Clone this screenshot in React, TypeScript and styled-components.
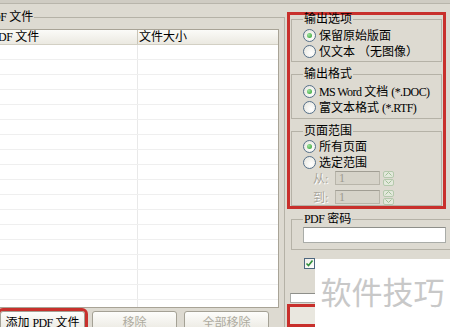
import React from 'react';
import styled, { createGlobalStyle } from 'styled-components';

const FONT = `"Liberation Serif", "Noto Sans CJK SC", serif`;

const GlobalStyle = createGlobalStyle`
  html, body { margin: 0; padding: 0; }
  body { width: 450px; height: 327px; overflow: hidden; background: #dddad1; }
  #root { width: 450px; height: 327px; }
`;

const Screen = styled.div`
  position: relative;
  width: 450px;
  height: 327px;
  overflow: hidden;
  background: #dddad1;
  display: flex;
  flex-direction: column;
  font-family: ${FONT};
  font-size: 12px;
  color: #000;
`;

const TopStrip = styled.div`
  flex: none;
  height: 3px;
  background: #cfccc3;
  border-bottom: 1px solid #b8b5ab;
`;

const Main = styled.div`
  flex: 1;
  min-height: 0;
  display: flex;
`;

/* Latin runs are drawn narrower, like the bitmap font of the original */
const Latin = styled.span`
  font-size: 12px;
  letter-spacing: -0.6px;
`;

/* ---------- group boxes ---------- */

const FileGroup = styled.fieldset`
  flex: none;
  box-sizing: border-box;
  width: 305px;
  height: 340px;
  margin: 7px 0 0 -20px;
  padding: 0;
  min-width: 0;
  border: 1px solid #b5b2a7;
`;

const Legend = styled.legend<{ $lh?: number; $indent?: number }>`
  padding: 0 1px;
  margin-left: ${p => p.$indent ?? 0}px;
  line-height: ${p => p.$lh ?? 12}px;
  font-size: 12px;
  white-space: nowrap;
`;

const OptionGroup = styled.fieldset<{ $top: number; $bottom: number; $width?: number; $left?: number }>`
  box-sizing: border-box;
  ${p => (p.$width ? `width: ${p.$width}px;` : '')}
  margin: ${p => p.$top}px 0 0 ${p => p.$left ?? 0}px;
  padding: 0 0 ${p => p.$bottom}px 11px;
  min-width: 0;
  border: 1px solid #b5b2a7;
  display: flex;
  flex-direction: column;
`;

/* ---------- file list ---------- */

const FileList = styled.div`
  box-sizing: border-box;
  width: 289px;
  height: 279px;
  margin: 6px 0 0 9px;
  border: 1px solid #a8a396;
  background: #fff;
  display: flex;
  flex-direction: column;
  overflow: hidden;
`;

const ListHeader = styled.div`
  flex: none;
  box-sizing: border-box;
  height: 15px;
  display: grid;
  grid-template-columns: 146px 1fr;
  background: linear-gradient(#fbfbf8, #ebe9e1);
  border-bottom: 1px solid #d3d0c4;
`;

const HeaderCell = styled.div<{ $divider?: boolean }>`
  line-height: 14px;
  padding-left: 1px;
  white-space: nowrap;
  ${p => (p.$divider ? 'border-left: 1px solid #c9c6b9;' : '')}
`;

const ListRow = styled.div`
  flex: none;
  box-sizing: border-box;
  height: 15px;
  display: grid;
  grid-template-columns: 146px 1fr;
  border-bottom: 1px solid #efefef;
`;

const ListCell = styled.div<{ $divider?: boolean }>`
  ${p => (p.$divider ? 'border-left: 1px solid #e9e9e9;' : '')}
`;

const ButtonRow = styled.div`
  display: flex;
  gap: 7px;
  margin: 3px 0 0 19px;
`;

const PushButton = styled.button<{ $marked?: boolean }>`
  flex: none;
  box-sizing: border-box;
  width: 85px;
  height: 22px;
  padding: 0;
  border: 1px solid #a4a195;
  border-radius: 3px;
  background: linear-gradient(#fdfdfb, #e9e7df);
  font-family: ${FONT};
  font-size: 12px;
  color: ${p => (p.disabled ? '#aeaba0' : '#000')};
  outline: ${p => (p.$marked ? '3px solid #c8302c' : 'none')};
`;

/* ---------- right column ---------- */

const RightColumn = styled.div`
  flex: none;
  width: 170px;
  margin-left: 2px;
  display: flex;
  flex-direction: column;
`;

const Highlight = styled.div`
  box-sizing: border-box;
  width: 159px;
  height: 198px;
  margin-top: 8px;
  padding: 0 1px;
  border: 3px solid #c8302c;
  display: flex;
  flex-direction: column;
`;

const OptionList = styled.div<{ $top: number }>`
  display: flex;
  flex-direction: column;
  margin-top: ${p => p.$top}px;
`;

const RadioRow = styled.label`
  height: 16px;
  display: flex;
  align-items: center;
  gap: 3px;
  white-space: nowrap;
`;

const Radio = styled.span<{ $checked?: boolean }>`
  position: relative;
  flex: none;
  box-sizing: border-box;
  width: 13px;
  height: 13px;
  border-radius: 50%;
  border: 1px solid #55708a;
  background: radial-gradient(circle at 65% 65%, #ffffff 0%, #e4e3da 100%);
  &::after {
    content: '';
    display: ${p => (p.$checked ? 'block' : 'none')};
    position: absolute;
    left: 3px;
    top: 3px;
    width: 5px;
    height: 5px;
    border-radius: 50%;
    background: radial-gradient(circle at 35% 35%, #9ee39e, #2c9c2c);
  }
`;

const RangeRow = styled.div<{ $top: number }>`
  height: 14px;
  display: flex;
  align-items: center;
  margin-top: ${p => p.$top}px;
`;

const RangeLabel = styled.span`
  width: 22px;
  margin-left: 10px;
  color: #a9a69c;
  text-shadow: 1px 1px 0 #fff;
  white-space: nowrap;
`;

const RangeInput = styled.div`
  box-sizing: border-box;
  width: 45px;
  height: 14px;
  border: 1px solid #b8b5aa;
  border-top-color: #a19e94;
  background: #d6d3c9;
  color: #9c998f;
  line-height: 12px;
  padding-left: 3px;
`;

const Spin = styled.div`
  display: flex;
  flex-direction: column;
  margin-left: 3px;
  gap: 1px;
`;

const SpinHalf = styled.div`
  box-sizing: border-box;
  width: 11px;
  height: 7px;
  border: 1px solid #b5c9ad;
  border-radius: 2px;
  background: #e3e9dc;
  display: flex;
  align-items: center;
  justify-content: center;
`;

const TextBox = styled.div<{ $width: number; $height: number; $top: number; $left: number }>`
  box-sizing: border-box;
  width: ${p => p.$width}px;
  height: ${p => p.$height}px;
  margin: ${p => p.$top}px 0 0 ${p => p.$left}px;
  background: #fff;
  border: 1px solid #a9aca8;
  border-top-color: #8e8f8a;
`;

const CheckBox = styled.div`
  box-sizing: border-box;
  width: 11px;
  height: 11px;
  margin: 8px 0 0 17px;
  border: 1px solid #4d6780;
  background: linear-gradient(135deg, #eeede6, #ffffff);
  display: flex;
  align-items: center;
  justify-content: center;
`;

const ConvertButton = styled.div`
  box-sizing: border-box;
  width: 160px;
  height: 30px;
  margin-top: 1px;
  border: 3px solid #c8302c;
  background: #e9e7df;
`;

const Watermark = styled.div`
  position: absolute;
  left: 315px;
  top: 259px;
  right: 0;
  bottom: 0;
  background: #fff;
  display: flex;
  align-items: center;
  justify-content: center;
  padding-bottom: 6px;
  box-sizing: border-box;
  font-family: "Noto Sans CJK SC", sans-serif;
  font-size: 31px;
  color: #c8c8c8;
  white-space: nowrap;
`;

const Chevron = ({ up }: { up?: boolean }) => (
  <svg width="7" height="4" viewBox="0 0 7 4">
    <path d={up ? 'M0.5 3.5 L3.5 0.5 L6.5 3.5' : 'M0.5 0.5 L3.5 3.5 L6.5 0.5'} fill="none" stroke="#9fbf95" strokeWidth="1" />
  </svg>
);

const Range = ({ label, top }: { label: string; top: number }) => (
  <RangeRow $top={top}>
    <RangeLabel>{label}</RangeLabel>
    <RangeInput>1</RangeInput>
    <Spin>
      <SpinHalf>
        <Chevron up />
      </SpinHalf>
      <SpinHalf>
        <Chevron />
      </SpinHalf>
    </Spin>
  </RangeRow>
);

const Option = ({ children, checked }: { children: React.ReactNode; checked?: boolean }) => (
  <RadioRow>
    <Radio $checked={checked} />
    <span>{children}</span>
  </RadioRow>
);

export default function App() {
  const rows = Array.from({ length: 18 }, (_, i) => i);
  return (
    <>
      <GlobalStyle />
      <Screen>
        <TopStrip />
        <Main>
          <FileGroup>
            <Legend $indent={4}>
              <Latin>PDF</Latin> 文件
            </Legend>
            <FileList>
              <ListHeader>
                <HeaderCell>
                  <Latin>PDF</Latin> 文件
                </HeaderCell>
                <HeaderCell $divider>文件大小</HeaderCell>
              </ListHeader>
              {rows.map(r => (
                <ListRow key={r}>
                  <ListCell />
                  <ListCell $divider />
                </ListRow>
              ))}
            </FileList>
            <ButtonRow>
              <PushButton $marked>
                添加 <Latin>PDF</Latin> 文件
              </PushButton>
              <PushButton disabled>移除</PushButton>
              <PushButton disabled>全部移除</PushButton>
            </ButtonRow>
          </FileGroup>

          <RightColumn>
            <Highlight>
              <OptionGroup $top={0} $bottom={2}>
                <Legend $lh={9}>输出选项</Legend>
                <OptionList $top={3}>
                  <Option checked>保留原始版面</Option>
                  <Option>仅文本 （无图像）</Option>
                </OptionList>
              </OptionGroup>
              <OptionGroup $top={8} $bottom={3}>
                <Legend $lh={9}>输出格式</Legend>
                <OptionList $top={4}>
                  <Option checked>
                    <Latin>MS Word</Latin> 文档 <Latin>(*.DOC)</Latin>
                  </Option>
                  <Option>
                    富文本格式 <Latin>(*.RTF)</Latin>
                  </Option>
                </OptionList>
              </OptionGroup>
              <OptionGroup $top={8} $bottom={1}>
                <Legend $lh={9}>页面范围</Legend>
                <OptionList $top={2}>
                  <Option checked>所有页面</Option>
                  <Option>选定范围</Option>
                </OptionList>
                <Range label="从:" top={1} />
                <Range label="到:" top={5} />
              </OptionGroup>
            </Highlight>

            <OptionGroup $top={6} $bottom={6} $width={170} $left={4}>
              <Legend $lh={9}>
                <Latin>PDF</Latin> 密码
              </Legend>
              <TextBox $width={143} $height={16} $top={3} $left={0} />
            </OptionGroup>

            <CheckBox>
              <svg width="9" height="9" viewBox="0 0 9 9">
                <path d="M1.5 4.5 L3.5 6.5 L7.5 1.5" fill="none" stroke="#2f8f3a" strokeWidth="1.6" />
              </svg>
            </CheckBox>
            <TextBox $width={150} $height={14} $top={24} $left={3} />
            <ConvertButton />
          </RightColumn>
        </Main>
        <Watermark>软件技巧</Watermark>
      </Screen>
    </>
  );
}
